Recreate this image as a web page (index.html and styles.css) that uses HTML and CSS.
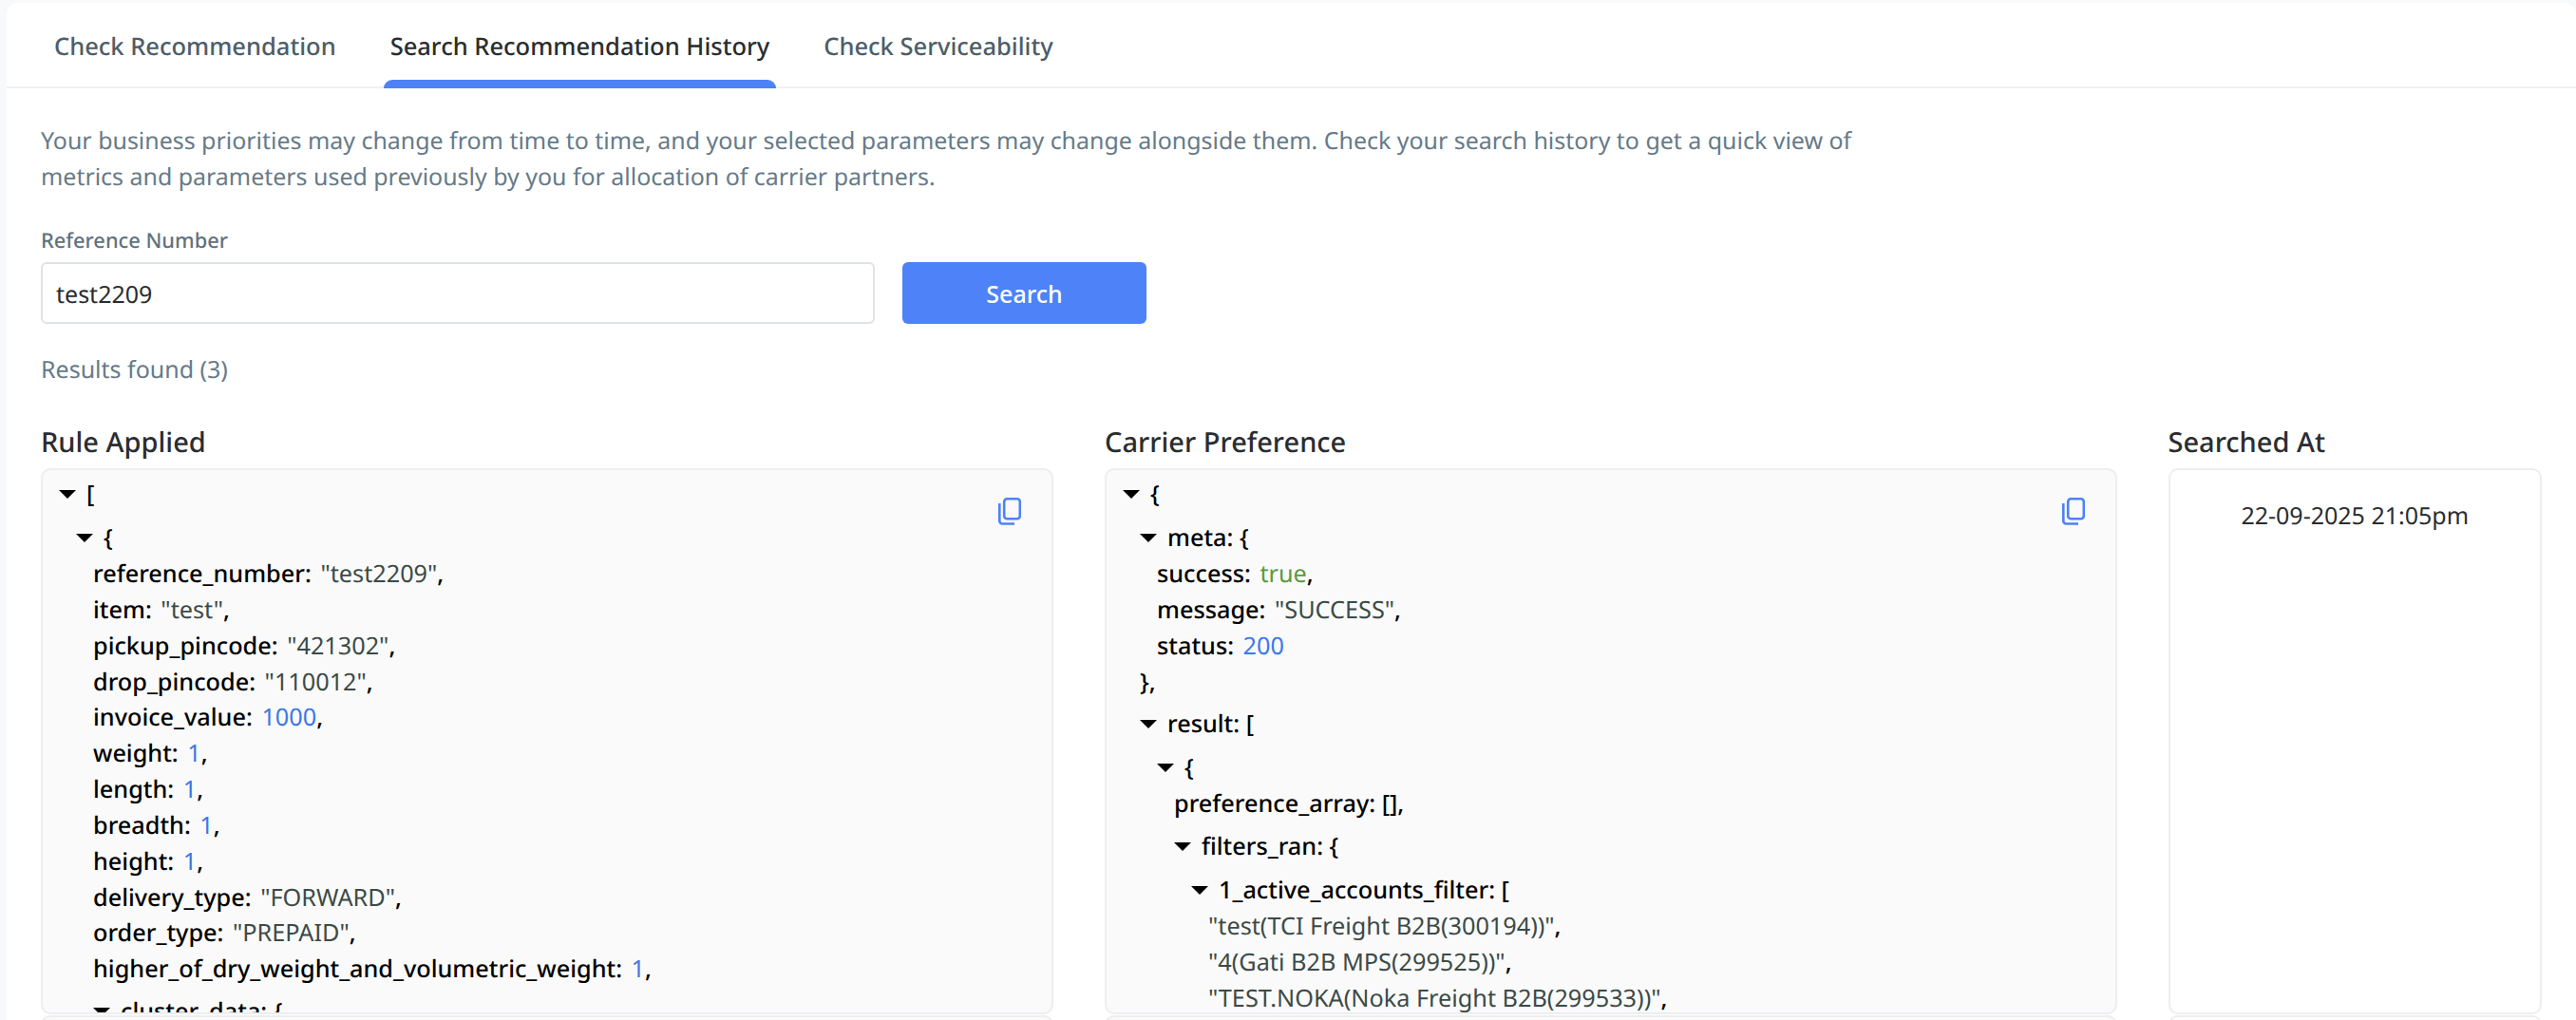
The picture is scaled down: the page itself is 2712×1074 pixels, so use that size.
FILE: index.html
```html
<!DOCTYPE html>
<html lang="en">
<head>
<meta charset="utf-8">
<title>Search Recommendation History</title>
<link rel="stylesheet" href="styles.css">
</head>
<body>
<main class="card">
  <nav class="tabs">
    <a class="tab">Check Recommendation</a>
    <a class="tab tab-active">Search Recommendation History</a>
    <a class="tab">Check Serviceability</a>
  </nav>
  <section class="content">
    <p class="intro">Your business priorities may change from time to time, and your selected parameters may change alongside them. Check your search history to get a quick view of metrics and parameters used previously by you for allocation of carrier partners.</p>
    <label class="field-label">Reference Number</label>
    <div class="search-row">
      <div class="input">test2209</div>
      <button class="btn">Search</button>
    </div>
    <p class="results">Results found (3)</p>
    <div class="table">
      <h3 class="col-head">Rule Applied</h3>
      <h3 class="col-head">Carrier Preference</h3>
      <h3 class="col-head">Searched At</h3>

      <div class="box json">
        <svg class="copy" viewBox="0 0 24 29"><rect x="6.2" y="1.2" width="16.6" height="21" rx="3" fill="none" stroke="currentColor" stroke-width="2.6"/><path d="M1.3 6v18.5a3 3 0 0 0 3 3H17" fill="none" stroke="currentColor" stroke-width="2.6"/></svg>
        <div class="t"><i></i>[</div>
        <div class="n">
          <div class="t"><i></i>{</div>
          <div class="n">
            <div class="r">reference_number: <s>"test2209"</s>,</div>
            <div class="r">item: <s>"test"</s>,</div>
            <div class="r">pickup_pincode: <s>"421302"</s>,</div>
            <div class="r">drop_pincode: <s>"110012"</s>,</div>
            <div class="r">invoice_value: <b>1000</b>,</div>
            <div class="r">weight: <b>1</b>,</div>
            <div class="r">length: <b>1</b>,</div>
            <div class="r">breadth: <b>1</b>,</div>
            <div class="r">height: <b>1</b>,</div>
            <div class="r">delivery_type: <s>"FORWARD"</s>,</div>
            <div class="r">order_type: <s>"PREPAID"</s>,</div>
            <div class="r">higher_of_dry_weight_and_volumetric_weight: <b>1</b>,</div>
            <div class="t"><i></i>cluster_data: {</div>
          </div>
        </div>
      </div>

      <div class="box json">
        <svg class="copy" viewBox="0 0 24 29"><rect x="6.2" y="1.2" width="16.6" height="21" rx="3" fill="none" stroke="currentColor" stroke-width="2.6"/><path d="M1.3 6v18.5a3 3 0 0 0 3 3H17" fill="none" stroke="currentColor" stroke-width="2.6"/></svg>
        <div class="t"><i></i>{</div>
        <div class="n">
          <div class="t"><i></i>meta: {</div>
          <div class="n">
            <div class="r">success: <u>true</u>,</div>
            <div class="r">message: <s>"SUCCESS"</s>,</div>
            <div class="r">status: <b>200</b></div>
          </div>
          <div class="r">},</div>
          <div class="t"><i></i>result: [</div>
          <div class="n">
            <div class="t"><i></i>{</div>
            <div class="n">
              <div class="r">preference_array: [],</div>
              <div class="t"><i></i>filters_ran: {</div>
              <div class="n">
                <div class="t"><i></i>1_active_accounts_filter: [</div>
                <div class="n">
                  <div class="r"><s class="bare">"test(TCI Freight B2B(300194))"</s>,</div>
                  <div class="r"><s class="bare">"4(Gati B2B MPS(299525))"</s>,</div>
                  <div class="r"><s class="bare">"TEST.NOKA(Noka Freight B2B(299533))"</s>,</div>
                </div>
              </div>
            </div>
          </div>
        </div>
      </div>

      <div class="box date">22-09-2025 21:05pm</div>

      <div class="box next"></div>
      <div class="box next"></div>
      <div class="box next white"></div>
    </div>
  </section>
</main>
</body>
</html>
```

FILE: styles.css
```css
* { box-sizing: border-box; }
html, body { margin: 0; height: 1074px; overflow: hidden; }
body { background: #f8f9fa; font-family: "Noto Sans", sans-serif; padding: 3px 0 0 7px; text-rendering: geometricPrecision; }
.card { background: #fff; height: 1071px; border-radius: 12px 12px 0 0; overflow: hidden; }
.tabs { display: flex; gap: 43px; height: 90px; padding-left: 43px; border-bottom: 2px solid #f0f1f3; }
.tab { position: relative; display: block; padding: 26px 7px 0; font-size: 25.5px; line-height: 40px; font-weight: 500; color: #4e5d68; }
.tab-active { color: #2a2d30; }
.tab-active::after { content: ""; position: absolute; left: 0; right: 0; bottom: -2px; height: 9px; background: #4d82f8; border-radius: 9px 9px 0 0; }
.content { padding: 0 36px; }
.intro { margin: 36px 0 0; width: 1930px; font-size: 24.95px; line-height: 38px; color: #667a88; }
.field-label { display: block; margin-top: 34px; font-size: 21.8px; line-height: 30px; font-weight: 500; color: #5f7280; }
.search-row { display: flex; gap: 29px; margin-top: 7px; }
.input { width: 878px; height: 65px; border: 2px solid #dfe3e6; border-radius: 6px; padding-left: 14px; font-size: 25px; line-height: 65px; color: #2a2d30; }
.btn { width: 257px; height: 65px; border: 0; border-radius: 6px; background: #4d82f8; color: #fff; font: 500 25px "Noto Sans", sans-serif; }
.results { margin: 30px 0 0; font-size: 25px; line-height: 36px; color: #667a88; }
.table { display: grid; grid-template-columns: 1066px 1065.5px 393.5px; column-gap: 54px; margin-top: 38px; }
.col-head { margin: 0; height: 48px; font-size: 29px; line-height: 42px; font-weight: 500; color: #2a2d30; }
.box { position: relative; height: 575px; border: 2px solid #eceef0; border-radius: 10px; background: #fafafa; overflow: hidden; }
.next { margin-top: 1px; }
.white, .date { background: #fff; }
.date { text-align: center; font-size: 25px; padding-top: 29px; line-height: 38px; color: #2a2d30; }
.json { padding: 0 0 0 17px; font-size: 25.25px; line-height: 38px; color: #000; font-weight: 500; }
.json s, .json b, .json u { margin-left: 3px; text-decoration: none; font-weight: 400; }
.json s { color: #3c4a46; }
.json s.bare { margin-left: 0; }
.json b { color: #3d78e8; }
.json u { color: #5a9a3c; }
.r { line-height: 37.85px; }
.n { padding-left: 18px; }
.t { position: relative; padding: 6px 0 1.5px 29px; }
.t i { position: absolute; left: 0; top: 21px; border-style: solid; border-width: 9px 9px 0; border-color: #000 transparent transparent; }
.copy { position: absolute; top: 29px; right: 32px; width: 24px; height: 29px; color: #4d82f8; }
```
